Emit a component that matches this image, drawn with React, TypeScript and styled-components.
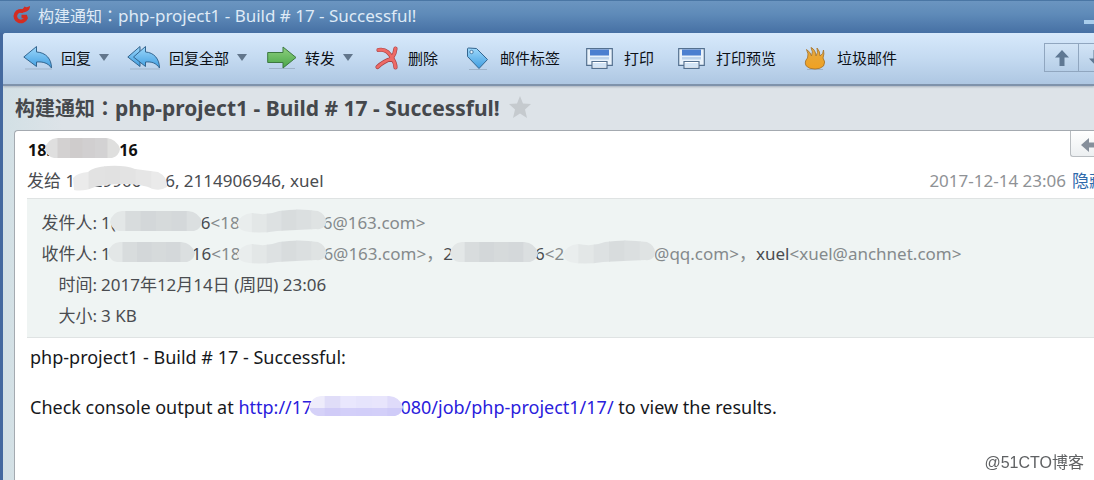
import React from "react";
import styled, { createGlobalStyle } from "styled-components";

const GlobalStyle = createGlobalStyle`
  * { box-sizing: border-box; }
  body {
    margin: 0;
    font-family: "Noto Sans", "Noto Sans CJK SC", sans-serif;
    font-size: 17px;
    color: #4a4c50;
    overflow: hidden;
  }
  button { font: inherit; color: inherit; }
`;

const Window = styled.div`
  display: flex;
  flex-direction: column;
  min-height: 100vh;
  overflow: hidden;
  background: #44699f;
`;

const TitleBar = styled.header`
  display: flex;
  align-items: center;
  gap: 6px;
  height: 33px;
  padding: 0 0 4px 12px;
  border-top: 1px solid #4a76a4;
  background: linear-gradient(#6b95c0, #5f8bb9 40%, #4670a4);
  color: #dfeaf6;
`;

const TitleText = styled.span`
  flex: 1;
  line-height: 24px;
  white-space: nowrap;
`;

const Cjk = styled.span<{ $size: number }>`
  font-size: ${(p) => p.$size}px;
`;

const Colon = styled.span`
  font-family: "Noto Sans CJK TC", sans-serif;
`;

const Minimize = styled.button`
  width: 24px;
  height: 4px;
  margin: 14px -14px 0 0;
  padding: 0;
  border: 0;
  background: #a9cdec;
`;

const Frame = styled.div`
  display: flex;
  flex: 1;
  flex-direction: column;
  margin-left: 3px;
  border-radius: 3px 0 0 0;
  overflow: hidden;
  background: linear-gradient(90deg, #d2e0e5, #dde3e8 60px);
`;

const Toolbar = styled.nav`
  display: flex;
  align-items: center;
  height: 53px;
  padding: 0 0 2px 20px;
  border-bottom: 2px solid #7f93ab;
  box-shadow: 0 1px 2px #a9b2bd;
  background: linear-gradient(#d7e9fb, #c4daf1 50%, #aec7e2);
`;

const Tool = styled.button<{ $gap: number; $after: number }>`
  display: flex;
  align-items: center;
  gap: ${(p) => p.$gap}px;
  margin: 0 ${(p) => p.$after}px 0 0;
  padding: 0;
  border: 0;
  background: none;
  color: #0c1016;
  font-size: 15px;
  line-height: 24px;
  white-space: nowrap;
`;

const ToolIcon = styled.svg<{ $w: number }>`
  width: ${(p) => p.$w}px;
  height: 26px;
  overflow: visible;
`;

const Caret = styled.svg`
  width: 10px;
  height: 7px;
`;

const Pager = styled.div`
  display: flex;
  margin: 0 -20px 0 auto;
  border: 1px solid #90a6bf;
`;

const PagerButton = styled.button`
  display: grid;
  place-items: center;
  width: 34px;
  height: 27px;
  padding: 0;
  border: 0;
  border-right: 1px solid #90a6bf;
  background: linear-gradient(#d2e4f6, #b6cee7);
`;

const Subject = styled.h1`
  display: flex;
  align-items: center;
  gap: 9px;
  height: 44px;
  margin: 0;
  padding: 0 0 2px 12px;
  font-size: 21px;
  font-weight: 700;
  color: #45484c;
  white-space: nowrap;
`;

const Card = styled.main`
  flex: 1;
  margin: 0 -12px 0 11px;
  border: 1px solid #a4aab0;
  border-width: 1px 0 0 1px;
  border-radius: 4px 0 0 0;
  background: #fff;
  overflow: hidden;
`;

const SenderRow = styled.div`
  display: flex;
  align-items: center;
  justify-content: space-between;
  height: 37px;
  padding-left: 13px;
  color: #111;
  font-size: 16px;
  font-weight: 700;
`;

const ReplyTab = styled.button`
  align-self: flex-start;
  width: 36px;
  height: 26px;
  padding: 2px 0 0 10px;
  border: 1px solid #b9bdc1;
  border-width: 0 0 1px 1px;
  border-radius: 0 0 0 3px;
  background: linear-gradient(#fff, #eceff1);
  text-align: left;
  line-height: 0;
`;

const RecipientRow = styled.div`
  display: flex;
  align-items: center;
  justify-content: space-between;
  height: 29px;
  padding: 0 0 6px 12px;
  white-space: nowrap;
`;

const SentAt = styled.span`
  color: #8f9296;
`;

const HideLink = styled.a`
  margin-left: 6px;
  color: #2f69ab;
  text-decoration: none;
`;

const Details = styled.dl`
  display: grid;
  grid-template-columns: 70px 1fr;
  column-gap: 4px;
  grid-auto-rows: 31px;
  align-items: center;
  margin: 1px 0 0 12px;
  padding: 8px 0 6px;
  border: 1px solid #dfe3e3;
  border-width: 1px 0;
  background: #eff4f3;
  line-height: 24px;
  white-space: nowrap;
`;

const Label = styled.dt`
  text-align: right;
`;

const Value = styled.dd`
  margin: 0;
`;

const Address = styled.span`
  color: #858a8c;
`;

const Body = styled.article`
  padding: 7px 0 40px 15px;
  color: #16181c;
  font-size: 18px;
  line-height: 25px;

  p { margin: 0 0 25px; }
  a { color: #2a20dc; text-decoration: none; }
`;

const Mask = styled.span<{ $w: number }>`
  position: relative;
  display: inline-block;
  width: ${(p) => p.$w}px;
  white-space: pre;
`;

const MaskArt = styled.svg<{ $lap: number }>`
  position: absolute;
  top: 50%;
  left: -${(p) => p.$lap}px;
  transform: translateY(-50%);
  overflow: visible;
`;

const Watermark = styled.footer`
  position: fixed;
  right: 10px;
  bottom: 6px;
  color: #5f6163;
  font-family: "Liberation Sans", "Noto Sans CJK SC", sans-serif;
  font-size: 16px;
  line-height: 22px;
`;

type SmudgeProps = {
  id: string;
  space: number;
  lap?: number;
  shape: (w: number) => string;
  tones: string[];
  lower?: string;
  children?: React.ReactNode;
};

/* Blurred-out stroke over part of an address. It reaches `lap` pixels over the
   characters on each side; tones run left to right. */
function Smudge({ id, space, lap = 3, shape, tones, lower, children }: SmudgeProps) {
  const w = space + lap * 2;
  const step = w / tones.length;
  return (
    <Mask $w={space}>
      {children || "\u00a0"}
      <MaskArt $lap={lap} width={w} height={24} viewBox={`0 0 ${w} 24`} aria-hidden="true">
        <clipPath id={id}>
          <path d={shape(w)} />
        </clipPath>
        <g clipPath={`url(#${id})`}>
          {tones.map((t, i) => (
            <rect key={i} x={i * step} y={-6} width={step + 1} height={34} fill={t} />
          ))}
          {lower && <rect x={0} y={12} width={w} height={16} fill={lower} fillOpacity={0.6} />}
        </g>
      </MaskArt>
    </Mask>
  );
}

const pill = (w: number) =>
  `M0 11Q2 1 12 0H${w - 14}Q${w - 3} 1 ${w} 11Q${w - 1} 18 ${w - 8} 20H9Q2 19 0 11Z`;
const wave = (w: number) =>
  `M0 12Q4 3 15 2Q30 5 42 0Q62-3 ${w - 8} 0Q${w + 1} 4 ${w} 12Q${w - 2} 19 ${w - 10} 18L40 20Q20 23 7 20Q1 18 0 12Z`;
const cloud = (w: number) =>
  `M0 9Q4 4 15 3Q20-2 35-3Q52-4 62 0L${w - 9} 3Q${w + 1} 8 ${w} 18Q${w - 6} 22 ${w - 14} 20Q70 15 50 15Q32 15 22 18Q10 23 1 21Z`;

const bold = ["#dfdfdf", "#d3d1d1", "#cfcccc", "#d1cfd0", "#d3d2d3", "#dfdfde"];
const grays = ["#e3e7e7", "#d8dcdd", "#d3d7d9", "#d6dadb", "#d4d8da", "#dbdfe0"];
const soft = ["#e9eded", "#e3e7e7", "#dde1e2", "#d8dcdd", "#dbdfe0", "#dfe3e3"];
const pale = ["#ebebeb", "#e2e2e2", "#e1e1e1", "#e3e3e3", "#e6e6e6", "#eaeaea"];
const violet = ["#eeecfb", "#e0ddf8", "#e9e7fd", "#e6e4fc", "#e8e5fc", "#dfdbfa"];

const DropCaret = () => (
  <Caret viewBox="0 0 10 7" aria-hidden="true">
    <path d="M0 0H10L5 7Z" fill="#62768c" />
  </Caret>
);

const GradientDefs = styled.svg`
  display: block;
  width: 0;
  height: 0;
`;

const Defs = () => (
  <GradientDefs aria-hidden="true">
    <defs>
      <linearGradient id="blue" x1="0" y1="0" x2="0" y2="1">
        <stop offset="0" stopColor="#9dd8fb" />
        <stop offset="1" stopColor="#3f9de0" />
      </linearGradient>
      <linearGradient id="green" x1="0" y1="0" x2="0" y2="1">
        <stop offset="0" stopColor="#8fd07f" />
        <stop offset="1" stopColor="#48a547" />
      </linearGradient>
      <linearGradient id="flame" x1="0" y1="0" x2="0" y2="1">
        <stop offset="0" stopColor="#e5a940" />
        <stop offset="1" stopColor="#f0a122" />
      </linearGradient>
    </defs>
  </GradientDefs>
);

const ReplyIcon = () => (
  <ToolIcon $w={30} viewBox="0 0 30 26" aria-hidden="true">
    <path d="M2 24H29" stroke="#9fb3c9" />
    <path d="M.8 12L13.500 1.500V7C23 7.500 28.500 14 28.500 23C25 18 20 16.500 13.500 17V21.500Z" fill="url(#blue)" stroke="#33658f" strokeLinejoin="round" />
  </ToolIcon>
);

const ReplyAllIcon = () => (
  <ToolIcon $w={34} viewBox="0 0 34 26" aria-hidden="true">
    <path d="M3 24H33" stroke="#9fb3c9" />
    <path d="M.8 12L13 1.500V21.500Z" fill="url(#blue)" stroke="#33658f" strokeLinejoin="round" />
    <path d="M6.500 12L18.500 1.500V7C27 7.500 32.500 14 32.500 23C29 18 25 16.500 18.500 17V21.500Z" fill="url(#blue)" stroke="#33658f" strokeLinejoin="round" />
  </ToolIcon>
);

const ForwardIcon = () => (
  <ToolIcon $w={30} viewBox="0 0 30 26" aria-hidden="true">
    <path d="M2 23.500H28" stroke="#9fb3c9" />
    <path d="M.7 7.500H16V2L29 12.500L16 23V17.500H.7Z" fill="url(#green)" stroke="#3c7840" strokeLinejoin="round" />
  </ToolIcon>
);

const deleteStrokes = "M3.500 5Q9 4 12.500 7T17 13.500M20.500 3.500Q20 9 17 13Q20.500 18 20.500 22.500M17 13.500Q8 16.500 2.500 22";

const DeleteIcon = () => (
  <ToolIcon $w={25} viewBox="0 0 25 26" aria-hidden="true">
    <path d={deleteStrokes} fill="none" stroke="#a84347" strokeWidth="4.200" strokeLinecap="round" strokeLinejoin="round" />
    <path d={deleteStrokes} fill="none" stroke="#ee6a66" strokeWidth="2.800" strokeLinecap="round" strokeLinejoin="round" />
  </ToolIcon>
);

const TagIcon = () => (
  <ToolIcon $w={23} viewBox="0 0 23 26" aria-hidden="true">
    <path d="M3 24.500H21" stroke="#9fb3c9" />
    <path d="M1.500 4Q1.500 3 2.500 3L10.500 3.500L21.500 14.500L13 23.500L1.500 11.500Z" fill="url(#blue)" stroke="#33658f" strokeLinejoin="round" />
    <circle cx="5.500" cy="7" r="1.700" fill="#e4f3fd" stroke="#33658f" strokeWidth=".8" />
  </ToolIcon>
);

const PrintIcon = () => (
  <ToolIcon $w={27} viewBox="0 0 27 26" aria-hidden="true">
    <path d="M.7 3.700H26.300V20.300H.7Z" fill="#e9f2fb" stroke="#54708f" strokeWidth="1.200" />
    <path d="M4 4.500H23V10.500H4Z" fill="#4b7fd0" />
    <path d="M4 12H23V14.500H4Z" fill="#bcd3ec" />
    <path d="M6 16.500H21V23.300H6Z" fill="#fff" stroke="#54708f" strokeWidth="1.200" />
    <path d="M7 18H20V22H7Z" fill="#d3e4f5" />
  </ToolIcon>
);

const FlameIcon = () => (
  <ToolIcon $w={22} viewBox="0 0 22 26" aria-hidden="true">
    <path d="M3 24.500H19" stroke="#9fb3c9" />
    <path d="M3.500 13Q5 9 2.500 4.500Q6.500 7 7.500 11Q9.500 7 7 2.500Q11.500 4.500 12 11Q14.500 8 13 3Q16 6 16 11Q19.500 9 19.500 5Q20.500 9 19 13Q22 17 19.500 21Q16.500 24 11 24Q5 24 2.300 21Q-.2 17 3.500 13Z" fill="url(#flame)" stroke="#a9762c" strokeWidth=".9" strokeLinejoin="round" />
  </ToolIcon>
);

const ArrowIcon = ({ turn }: { turn: number }) => (
  <svg width="14" height="16" viewBox="0 0 14 16" aria-hidden="true">
    <path d="M7 0L14 7.500H9.500V16H4.500V7.500H0Z" fill="#5f7893" transform={`rotate(${turn} 7 8)`} />
  </svg>
);

const tools = [
  { label: "回复", icon: <ReplyIcon />, menu: true, gap: 8, after: 18 },
  { label: "回复全部", icon: <ReplyAllIcon />, menu: true, gap: 8, after: 20 },
  { label: "转发", icon: <ForwardIcon />, menu: true, gap: 8, after: 22 },
  { label: "删除", icon: <DeleteIcon />, menu: false, gap: 8, after: 28 },
  { label: "邮件标签", icon: <TagIcon />, menu: false, gap: 11, after: 26 },
  { label: "打印", icon: <PrintIcon />, menu: false, gap: 11, after: 24 },
  { label: "打印预览", icon: <PrintIcon />, menu: false, gap: 11, after: 28 },
  { label: "垃圾邮件", icon: <FlameIcon />, menu: false, gap: 11, after: 0 },
];

export default function App() {
  return (
    <Window>
      <GlobalStyle />
      <Defs />
      <TitleBar>
        <svg width="20" height="20" viewBox="0 0 20 20" aria-hidden="true">
          <path d="M11.500 6.500A5.500 5.300 0 1 0 14 13L13.500 11.500H9.500" fill="none" stroke="#d32c22" strokeWidth="3.600" />
          <path d="M6 6Q11 5 12.500 1.500Q15 3 18 1Q18 5 14.500 6.500Q12 8 8 7.500Z" fill="#d32c22" />
        </svg>
        <TitleText>
          <Cjk $size={16}>构建通知<Colon>：</Colon></Cjk>php-project1 - Build # 17 - Successful!
        </TitleText>
        <Minimize aria-label="最小化" />
      </TitleBar>
      <Frame>
        <Toolbar>
          {tools.map((t) => (
            <Tool key={t.label} $gap={t.gap} $after={t.after}>
              {t.icon}
              {t.label}
              {t.menu && <DropCaret />}
            </Tool>
          ))}
          <Pager>
            <PagerButton aria-label="上一封"><ArrowIcon turn={0} /></PagerButton>
            <PagerButton aria-label="下一封"><ArrowIcon turn={180} /></PagerButton>
          </Pager>
        </Toolbar>
        <Subject>
          <span>
            <Cjk $size={20}>构建通知<Colon>：</Colon></Cjk>php-project1 - Build # 17 - Successful!
          </span>
          <svg width="22" height="22" viewBox="0 0 22 22" aria-hidden="true">
            <path d="M11 0L14 7.500L22 8L16 13.500L18 22L11 17.500L4 22L6 13.500L0 8L8 7.500Z" fill="#c5cace" />
          </svg>
        </Subject>
        <Card>
          <SenderRow>
            <span>
              18
              <Smudge id="m1" space={73} lap={1} shape={pill} tones={bold}>.</Smudge>
              16
            </span>
            <ReplyTab aria-label="回复">
              <svg width="16" height="16" viewBox="0 0 16 16" aria-hidden="true">
                <path d="M0 8L8 1V5.500H16V10.500H8V15Z" fill="#868f9b" />
              </svg>
            </ReplyTab>
          </SenderRow>
          <RecipientRow>
            <span>
              发给 1
              <Smudge id="m2" space={90} lap={2} shape={cloud} tones={pale}>{"    29906"}</Smudge>
              6, 2114906946, xuel
            </span>
            <SentAt>
              2017-12-14 23:06
              <HideLink href="#">隐藏</HideLink>
            </SentAt>
          </RecipientRow>
          <Details>
            <Label>发件人:</Label>
            <Value>
              1
              <Smudge id="m3" space={90} lap={1} shape={pill} tones={grays}>(</Smudge>
              6
              <Address>
                &lt;18
                <Smudge id="m4" space={83} shape={wave} tones={soft} />
                6@163.com&gt;
              </Address>
            </Value>
            <Label>收件人:</Label>
            <Value>
              1
              <Smudge id="m5" space={81} shape={pill} tones={grays} />
              16
              <Address>
                &lt;18
                <Smudge id="m6" space={83} shape={wave} tones={soft} />
                6@163.com&gt;，
              </Address>
              2
              <Smudge id="m7" space={82} shape={pill} tones={grays} />
              6
              <Address>
                &lt;2
                <Smudge id="m8" space={90} lap={1} shape={wave} tones={soft} />
                @qq.com&gt;，
              </Address>
              xuel<Address>&lt;xuel@anchnet.com&gt;</Address>
            </Value>
            <Label>时间:</Label>
            <Value>2017年12月14日 (周四) 23:06</Value>
            <Label>大小:</Label>
            <Value>3 KB</Value>
          </Details>
          <Body>
            <p>php-project1 - Build # 17 - Successful:</p>
            <p>
              Check console output at{" "}
              <a href="#">
                http://17
                <Smudge id="m9" space={88} shape={pill} tones={violet} lower="#c5c0f7" />
                080/job/php-project1/17/
              </a>{" "}
              to view the results.
            </p>
          </Body>
        </Card>
      </Frame>
      <Watermark>@51CTO博客</Watermark>
    </Window>
  );
}
